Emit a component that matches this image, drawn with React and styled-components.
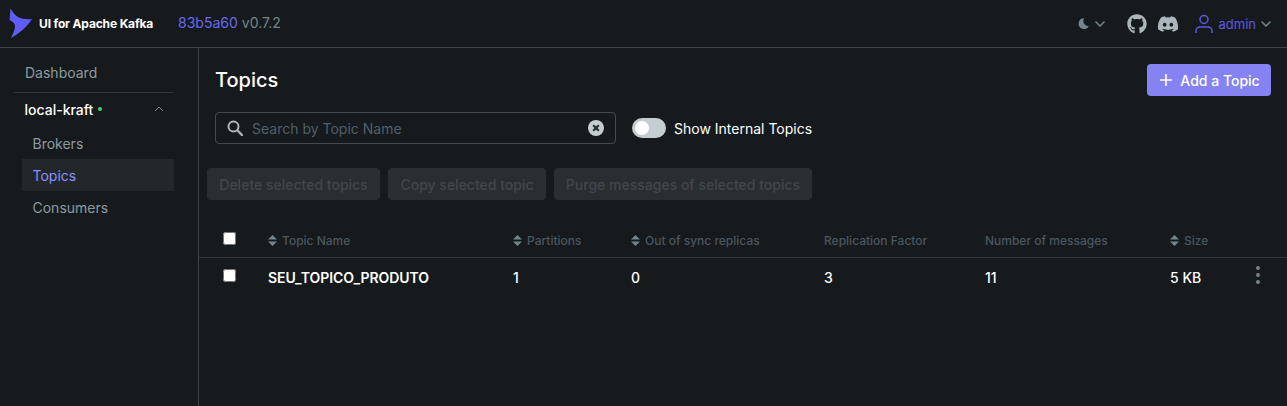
import React from 'react'
import styled, { createGlobalStyle } from 'styled-components'
import { FaDiscord, FaGithub } from 'react-icons/fa'

const GlobalStyle = createGlobalStyle`
  html, body {
    margin: 0;
    padding: 0;
    height: 100%;
    background: #171a1c;
    font-family: Inter, "Liberation Sans", sans-serif;
    overflow: hidden;
  }
`
const Layout = styled.div`
  width: 1287px;
  height: 406px;
  display: grid;
  grid-template-rows: 48px 1fr;
  background: #171a1c;
`
const NavBar = styled.header`
  display: flex;
  align-items: center;
  padding-left: 9px;
  padding-right: 16px;
  border-bottom: 1px solid #3e4347;
`
const Brand = styled.div`
  display: flex;
  align-items: center;
  gap: 7px;
  width: 169px;
  color: #fff;
  font-size: 12px;
  font-weight: 700;
  letter-spacing: -0.15px;
  padding-bottom: 1px;
`
const Version = styled.div`
  display: flex;
  gap: 4px;
  font-size: 14px;
  line-height: 20px;
  color: #73848c;
  padding-bottom: 1px;
`
const Commit = styled.span`
  color: #6a68ee;
`
const NavRight = styled.div`
  margin-left: auto;
  display: flex;
  align-items: center;
  color: #abb5ba;
`
const ThemeToggle = styled.div`
  display: flex;
  align-items: center;
  gap: 6px;
  margin-right: 22px;
  color: #73848c;
`
const SocialLink = styled.span`
  display: flex;
  color: #abb5ba;
  margin-right: ${(p) => p.$gap}px;
`
const UserMenu = styled.div`
  display: flex;
  align-items: center;
  gap: 5px;
  color: #5b59e8;
  font-size: 13px;
`
const UserIcon = styled.svg`
  margin-right: 1px;
`
const Body = styled.div`
  display: grid;
  grid-template-columns: 199px 1fr;
  min-height: 0;
`
const SideBar = styled.aside`
  border-right: 1px solid #3e4347;
  padding: 8px 24px 0 14px;
`
const NavItem = styled.div`
  height: 32px;
  display: flex;
  align-items: center;
  font-size: 14px;
  color: ${(p) => (p.$active ? '#8f8dff' : '#8d9aa1')};
  background: ${(p) => (p.$active ? '#22282a' : 'transparent')};
  margin-left: ${(p) => (p.$sub ? 8 : 0)}px;
  padding-left: ${(p) => (p.$sub ? 10.5 : 11)}px;
`
const ClusterDivider = styled.div`
  border-top: 1px solid #2f3437;
  margin: 4px 0 0;
`
const ClusterRow = styled.div`
  height: 32px;
  display: flex;
  align-items: center;
  padding: 0 10px 0 10.5px;
  margin-bottom: 2px;
  color: #fff;
  font-size: 14px;
  font-weight: 500;
`
const StatusDot = styled.span`
  width: 4px;
  height: 4px;
  border-radius: 50%;
  background: #3dd47f;
  margin-left: 5px;
`
const Chevron = styled.span`
  margin-left: auto;
  display: flex;
  color: #73848c;
`
const Main = styled.main`
  min-width: 0;
  padding-top: 16px;
`
const PageHeader = styled.div`
  display: flex;
  align-items: center;
  justify-content: space-between;
  padding: 0 16px;
  height: 32px;
`
const Title = styled.h1`
  margin: 0;
  color: #fff;
  font-size: 20px;
  font-weight: 500;
  line-height: 32px;
`
const AddButton = styled.button`
  height: 32px;
  width: 124px;
  border: 0;
  border-radius: 4px;
  background: #8583f2;
  color: #fff;
  font: 500 14px Inter, sans-serif;
  display: flex;
  align-items: center;
  justify-content: center;
  gap: 8px;
  padding: 0 0 0 2px;
`
const ControlRow = styled.div`
  display: flex;
  align-items: center;
  padding: 0 16px;
  margin-top: 16px;
  gap: 16px;
`
const SearchBox = styled.div`
  width: 401px;
  height: 32px;
  box-sizing: border-box;
  border: 1px solid #454a4e;
  border-radius: 4px;
  display: flex;
  align-items: center;
`
const SearchIconWrap = styled.span`
  display: flex;
  margin: 0 9px 0 11px;
  color: #abb5ba;
`
const SearchInput = styled.input`
  flex: 1;
  min-width: 0;
  background: transparent;
  border: 0;
  outline: 0;
  padding: 0;
  font: 400 14px Inter, sans-serif;
  color: #fff;
  &::placeholder {
    color: #4f5f69;
    opacity: 1;
  }
`
const ClearIcon = styled.span`
  display: flex;
  margin-right: 11px;
`
const SwitchLabel = styled.label`
  display: flex;
  align-items: center;
  gap: 8px;
  color: #fff;
  font-size: 14px;
`
const SwitchTrack = styled.span`
  width: 34px;
  height: 20px;
  border-radius: 10px;
  background: #c5cdd0;
  display: flex;
  align-items: center;
  padding-left: 3px;
  box-sizing: border-box;
`
const SwitchKnob = styled.span`
  width: 14px;
  height: 14px;
  border-radius: 50%;
  background: #fff;
`
const BatchActions = styled.div`
  display: flex;
  gap: 8px;
  padding: 0 8px;
  margin-top: 24px;
`
const BatchButton = styled.button`
  height: 32px;
  width: ${(p) => p.$width}px;
  border: 0;
  border-radius: 4px;
  background: #292e31;
  color: #41474b;
  font: 500 14px Inter, sans-serif;
  padding: 0;
  white-space: nowrap;
`
const TopicsTable = styled.table`
  margin-top: 25px;
  width: 100%;
  table-layout: fixed;
  border-collapse: collapse;
`
const HeaderCell = styled.th`
  height: 30px;
  padding: 0 0 2px;
  text-align: left;
  font-size: 12px;
  font-weight: 500;
  color: #4a565e;
  border-bottom: 1px solid #33383c;
  white-space: nowrap;
`
const BodyCell = styled.td`
  height: 38px;
  padding: 0;
  font-size: 14px;
  font-weight: ${(p) => (p.$strong ? 600 : 500)};
  letter-spacing: ${(p) => (p.$strong ? '-0.05px' : '0')};
  color: #fff;
  white-space: nowrap;
`
const CheckCell = styled.span`
  display: flex;
  padding-left: 24px;
`
const RowCheck = styled.input.attrs({ type: 'checkbox' })`
  width: 13px;
  height: 13px;
  margin: 0 0 4px;
`
const SortArrows = styled.svg`
  margin-right: 5px;
  vertical-align: -1px;
`
const MenuDots = styled.span`
  display: flex;
  flex-direction: column;
  gap: 3px;
  width: 4px;
  margin: 0 0 5px;
`
const MenuDot = styled.span`
  width: 4px;
  height: 4px;
  border-radius: 50%;
  background: #73848c;
`

const Sort = () => (
  <SortArrows width="9" height="11" viewBox="0 0 9 11">
    <path d="M4.5 0 9 4.5H0Z M0 6.5h9L4.5 11Z" fill="#73848c" />
  </SortArrows>
)

const Logo = () => (
  <svg width="23" height="30" viewBox="0 0 23 30">
    <path
      d="M1.5.5C3.5 4 6 7.5 9 9c4 2 9 2.500 14 2-3 5-8 10-12 13-3 2-7 5-9 6 1.500-3 4-8 4-12 0-3-3-4.500-5.500-6Z"
      fill="#5f5df5"
    />
  </svg>
)

const Moon = () => (
  <svg width="11" height="11" viewBox="0 0 11 11">
    <path d="M6.200.2A5.400 5.400 0 1 0 10.800 8.200 5.200 5.200 0 0 1 6.200.2Z" fill="currentColor" />
  </svg>
)

const Caret = ({ color = 'currentColor' }) => (
  <svg width="10" height="6" viewBox="0 0 10 6" fill="none">
    <path d="M1 1l4 4 4-4" stroke={color} strokeWidth="1.6" strokeLinecap="round" strokeLinejoin="round" />
  </svg>
)

const columns = [
  ['Topic Name', true],
  ['Partitions', true],
  ['Out of sync replicas', true],
  ['Replication Factor', false],
  ['Number of messages', false],
  ['Size', true],
]
const values = ['SEU_TOPICO_PRODUTO', '1', '0', '3', '11', '5 KB']

const App = () => (
  <Layout>
    <GlobalStyle />
    <NavBar>
      <Brand>
        <Logo />
        UI for Apache Kafka
      </Brand>
      <Version>
        <Commit>83b5a60</Commit> v0.7.2
      </Version>
      <NavRight>
        <ThemeToggle>
          <Moon />
          <Caret />
        </ThemeToggle>
        <SocialLink $gap={10}>
          <FaGithub size={20} />
        </SocialLink>
        <SocialLink $gap={16}>
          <FaDiscord size={22} />
        </SocialLink>
        <UserMenu>
          <UserIcon width="18" height="20" viewBox="0 0 18 20" fill="none" stroke="#5b59e8" strokeWidth="1.5">
            <circle cx="9" cy="5.500" r="4" />
            <path d="M1 19v-2a4 4 0 0 1 4-4h8a4 4 0 0 1 4 4v2" />
          </UserIcon>
          admin
          <Caret color="#73848c" />
        </UserMenu>
      </NavRight>
    </NavBar>
    <Body>
      <SideBar>
        <NavItem>Dashboard</NavItem>
        <ClusterDivider />
        <ClusterRow>
          local-kraft
          <StatusDot />
          <Chevron>
            <svg width="10" height="6" viewBox="0 0 10 6" fill="none">
              <path d="M1 5l4-4 4 4" stroke="currentColor" strokeWidth="1" />
            </svg>
          </Chevron>
        </ClusterRow>
        <NavItem $sub>Brokers</NavItem>
        <NavItem $sub $active>
          Topics
        </NavItem>
        <NavItem $sub>Consumers</NavItem>
      </SideBar>
      <Main>
        <PageHeader>
          <Title>Topics</Title>
          <AddButton>
            <svg width="12" height="12" viewBox="0 0 12 12">
              <path d="M6 0v12M0 6h12" stroke="#fff" strokeWidth="1.6" />
            </svg>
            Add a Topic
          </AddButton>
        </PageHeader>
        <ControlRow>
          <SearchBox>
            <SearchIconWrap>
              <svg width="16" height="16" viewBox="0 0 16 16" fill="none" stroke="currentColor">
                <circle cx="6.500" cy="6.500" r="5" strokeWidth="2" />
                <path d="M10.500 10.500 15 15" strokeWidth="2.400" strokeLinecap="round" />
              </svg>
            </SearchIconWrap>
            <SearchInput placeholder="Search by Topic Name" />
            <ClearIcon>
              <svg width="16" height="16" viewBox="0 0 16 16">
                <circle cx="8" cy="8" r="8" fill="#c5cdd0" />
                <path d="M5.200 5.200l5.600 5.600M10.800 5.200l-5.600 5.600" stroke="#22282a" strokeWidth="2" />
              </svg>
            </ClearIcon>
          </SearchBox>
          <SwitchLabel>
            <SwitchTrack>
              <SwitchKnob />
            </SwitchTrack>
            Show Internal Topics
          </SwitchLabel>
        </ControlRow>
        <BatchActions>
          <BatchButton disabled $width={173}>Delete selected topics</BatchButton>
          <BatchButton disabled $width={158}>Copy selected topic</BatchButton>
          <BatchButton disabled $width={258}>Purge messages of selected topics</BatchButton>
        </BatchActions>
        <TopicsTable>
          <colgroup>
            <col style={{ width: 69 }} />
            <col style={{ width: 245 }} />
            <col style={{ width: 118 }} />
            <col style={{ width: 193 }} />
            <col style={{ width: 161 }} />
            <col style={{ width: 185 }} />
            <col style={{ width: 86 }} />
            <col />
          </colgroup>
          <thead>
            <tr>
              <HeaderCell>
                <CheckCell>
                  <RowCheck />
                </CheckCell>
              </HeaderCell>
              {columns.map(([name, sortable]) => (
                <HeaderCell key={name}>
                  {sortable && <Sort />}
                  {name}
                </HeaderCell>
              ))}
              <HeaderCell />
            </tr>
          </thead>
          <tbody>
            <tr>
              <BodyCell>
                <CheckCell>
                  <RowCheck />
                </CheckCell>
              </BodyCell>
              {values.map((v, i) => (
                <BodyCell key={v} $strong={i === 0}>
                  {v}
                </BodyCell>
              ))}
              <BodyCell>
                <MenuDots>
                  <MenuDot />
                  <MenuDot />
                  <MenuDot />
                </MenuDots>
              </BodyCell>
            </tr>
          </tbody>
        </TopicsTable>
      </Main>
    </Body>
  </Layout>
)

export default App
